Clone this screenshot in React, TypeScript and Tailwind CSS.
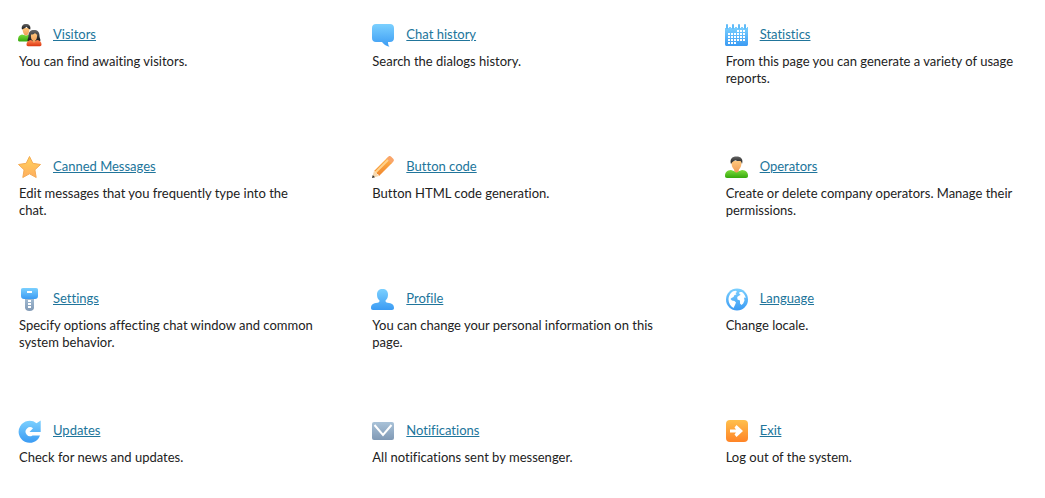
import type { ReactNode } from 'react';

type MenuItem = {
  title: string;
  text: string;
  icon: ReactNode;
};

const calendarDays = [
  [12, 15, 18],
  [3, 6, 9, 12, 15, 18],
  [3, 6, 9, 12, 15, 18],
  [3, 6, 9, 12, 15, 18],
  [3, 6, 9],
];

const items: MenuItem[] = [
  {
    title: 'Visitors',
    text: 'You can find awaiting visitors.',
    icon: (
      <>
        <path d="M0 17c0-3 1-5 4-5.500l4 1 4-1c3 .5 4 2.500 4 5.500 0 1-1 1.500-2 1.500H2c-1 0-2-.5-2-1.500z" fill="url(#green)" />
        <path d="M4.500 5h7c0 4-1.500 7.500-3.500 7.500S4.500 9 4.500 5z" fill="url(#skin)" />
        <path d="M4 6.500C3 3 5 1 8 1s5.200 2 4.200 5.500C10 5.500 9 4.500 8.500 3.800 7.500 5 6 5.500 4 6.500z" fill="url(#hair)" />
        <path d="M10 18.500c-1.200-2 .5-3 .5-6 0-3.500 2-5.500 5.500-5.500s5.500 2 5.500 5.500c0 3 1.700 4 .5 6z" fill="url(#hair)" />
        <path d="M8.500 21.500c0-2.800 1.500-3.800 4.500-4.500l3 2 3-2c3 .7 4.500 1.700 4.500 4.500 0 1-.7 1.700-1.500 1.700H10c-.8 0-1.500-.7-1.500-1.700z" fill="url(#red)" />
        <path d="M13 11.500c2 0 3-.5 4-1.500 1 1.300 1.700 1.500 2.200 1.500 0 3.500-1 5.500-1.700 6L16 20l-1.500-2.500c-1-.5-1.800-2.500-1.500-6z" fill="url(#skin)" />
      </>
    ),
  },
  {
    title: 'Chat history',
    text: 'Search the dialogs history.',
    icon: <path d="M5 1h14c2.500 0 4 1.500 4 4v10c0 2.500-1.500 4-4 4h-2c0 1.500.3 3.500 1.500 4.800-3.500-.8-6-2.500-7.500-4.800H5c-2.500 0-4-1.500-4-4V5c0-2.500 1.500-4 4-4z" fill="url(#blue)" />,
  },
  {
    title: 'Statistics',
    text: 'From this page you can generate a variety of usage reports.',
    icon: (
      <>
        <path d="M0 4h23v17c0 1.500-.5 2-2 2H2c-1.500 0-2-.5-2-2z" fill="url(#blue)" />
        {[1, 7, 13, 19].map(x => (
          <g key={x}>
            <rect x={x - 1} y="4" width="4" height="1" fill="#fff" />
            <rect x={x} y="1" width="2" height="5" rx="1" fill="#5fbaf8" />
          </g>
        ))}
        {calendarDays.map((row, y) =>
          row.map(x => <rect key={`${x}-${y}`} x={x} y={7 + y * 3} width="2" height="2" fill="#fff" />)
        )}
      </>
    ),
  },
  {
    title: 'Canned Messages',
    text: 'Edit messages that you frequently type into the chat.',
    icon: <path d="M11.500 1.500l3.300 6.800 7.700 1.200-5.600 5.300 1.300 7.700-6.700-3.700L4.800 22.500l1.300-7.700L.5 9.500l7.700-1.200z" fill="url(#gold)" stroke="#f5ab55" strokeLinejoin="round" />,
  },
  {
    title: 'Button code',
    text: 'Button HTML code generation.',
    icon: (
      <>
        <path d="M1 23l2-7 5 5z" fill="#f6d9b0" />
        <path d="M1 23l.8-3 2.200 2.200z" fill="#333" />
        <path d="M3 16L16.500 2.500 21.500 7.500 8 21c-.3-1.500-1-2-2-2-.2-1.700-1-2.500-3-3z" fill="url(#pencil)" />
        <path d="M4.500 17.500L18 4" stroke="#ffd38c" strokeWidth="2" />
        <path d="M15.500 3.500l2-2c1-.8 2-.6 3 .4l1.500 1.500c1 1 1.200 2 .4 3l-2 2z" fill="#f9a56a" />
      </>
    ),
  },
  {
    title: 'Operators',
    text: 'Create or delete company operators. Manage their permissions.',
    icon: (
      <>
        <path d="M0 21c0-4 2-5.500 6-6l5.500 2 5.500-2c4 .5 6 2 6 6 0 1.300-.7 2-2 2H2c-1.300 0-2-.7-2-2z" fill="url(#green)" />
        <path d="M6.500 6h10c.3 4-.8 7-2.500 8.500 0 1.500-1 3-2.500 3S9 16 9 14.500C7.300 13 6.200 10 6.500 6z" fill="url(#skin)" />
        <path d="M6 9C4.500 4 7 1.500 11.500 1.500S18.500 4 17 9c-.3-1.500-.8-2.300-1.500-3-2 .3-3.500 0-5-.8C9 6 7 6.500 6 9z" fill="url(#hair)" />
      </>
    ),
  },
  {
    title: 'Settings',
    text: 'Specify options affecting chat window and common system behavior.',
    icon: (
      <>
        <path d="M7 9h9v11.500c0 2-1.500 3.500-4.500 3.500S7 22.500 7 20.500z" fill="url(#steel)" />
        <path d="M10 14h3M10 17h3M10 20h3" stroke="#fff" strokeWidth="2" />
        <path d="M5 1h13c1.500 0 2 .8 2 2v6c0 1.800-1.200 3-3 3H6c-1.800 0-3-1.200-3-3V3c0-1.200.5-2 2-2z" fill="url(#blue)" />
        <rect x="9" y="4" width="5" height="2" fill="#fff" />
      </>
    ),
  },
  {
    title: 'Profile',
    text: 'You can change your personal information on this page.',
    icon: <path d="M11.500 2C15 2 17 4 17 7.500c0 2.500-.7 4.500-2.500 6 0 1.500.5 2 2 2.300 4.500.7 6.500 1.700 6.500 5.200 0 1.300-.7 2-2 2H2c-1.300 0-2-.7-2-2 0-3.500 2-4.500 6.500-5.200 1.500-.3 2-.8 2-2.300C6.700 12 6 10 6 7.500 6 4 8 2 11.500 2z" fill="url(#blue)" />,
  },
  {
    title: 'Language',
    text: 'Change locale.',
    icon: (
      <>
        <circle cx="12" cy="12.500" r="11" fill="url(#blue)" />
        <path d="M5.500 6.500C7 4.500 9 3.800 11 3.800l1 1.200-1.500 1 1 1.500-2 .5L8.500 10l-2 1-1 1 1.500 1.500 2.500.5 1.500 1.500-1 2.500-1.500 3C5.500 19.500 3.500 16 3.500 12.500c0-2 .7-4.200 2-6z" fill="#fff" />
        <path d="M14.500 5l2.500 0c2 1.500 3.300 3.500 3.700 6l-1.700-.5.5 3-1.300 3-1.700 1.500-1.500-1.500v-3l-2.500-1-.3-2.500 2-1.500 1.500-.5-1.500-1.500z" fill="#fff" />
      </>
    ),
  },
  {
    title: 'Updates',
    text: 'Check for news and updates.',
    icon: <path d="M22 16.500A11 11 0 1 1 18.500 4.200L22.700 1.500V13H11.500L15 9.200A4.500 4.500 0 1 0 14.500 16.500z" fill="url(#blue)" />,
  },
  {
    title: 'Notifications',
    text: 'All notifications sent by messenger.',
    icon: (
      <>
        <rect x="1" y="3" width="22" height="18" rx="2" fill="url(#steel)" />
        <path d="M3.500 6l8.500 10 8.500-10" fill="none" stroke="#fff" strokeWidth="2" />
      </>
    ),
  },
  {
    title: 'Exit',
    text: 'Log out of the system.',
    icon: (
      <>
        <rect x="1" y="1" width="22" height="22" rx="4" fill="url(#orange)" />
        <path d="M5 10.500H11L9.500 8.500l2-2.500 6.500 6-6.500 6-2-2.500 1.500-2H5z" fill="#fff" />
      </>
    ),
  },
];

const gradients = [
  { id: 'blue', from: '#7bd0ff', to: '#3b9bf3' },
  { id: 'green', from: '#7bdc3c', to: '#35a80c' },
  { id: 'skin', from: '#ffc77d', to: '#f09a55' },
  { id: 'hair', from: '#666666', to: '#151515' },
  { id: 'red', from: '#ff8a55', to: '#dc3510' },
  { id: 'gold', from: '#ffd35c', to: '#ffad5e' },
  { id: 'pencil', from: '#ffb347', to: '#f0862f' },
  { id: 'steel', from: '#a9c2d8', to: '#8099b5' },
  { id: 'orange', from: '#ffc04d', to: '#ff8426' },
];

function Gradients() {
  return (
    <svg className="absolute h-0 w-0" aria-hidden="true">
      <defs>
        {gradients.map(g => (
          <linearGradient key={g.id} id={g.id} x1="0" y1="0" x2="0" y2="1">
            <stop offset="0" stopColor={g.from} />
            <stop offset="1" stopColor={g.to} />
          </linearGradient>
        ))}
      </defs>
    </svg>
  );
}

export default function App() {
  return (
    <main className="min-h-screen bg-white pt-[23px] pr-[15px] pl-[18px] font-['Trebuchet_MS','Lato',sans-serif] text-[13px] leading-[17px] text-[#222] [font-variant-ligatures:none]">
      <Gradients />
      <ul className="grid auto-rows-[64px] grid-cols-3 gap-x-12 gap-y-[68px]">
        {items.map(item => (
          <li key={item.title}>
            <div className="flex items-start gap-[11px]">
              <svg viewBox="0 0 24 24" className="h-6 w-6 shrink-0" aria-hidden="true">
                {item.icon}
              </svg>
              <a href="#" className="pt-[3px] text-[#21759b] underline">
                {item.title}
              </a>
            </div>
            <p className="mt-[6px] pr-[6px] pl-px">{item.text}</p>
          </li>
        ))}
      </ul>
    </main>
  );
}
